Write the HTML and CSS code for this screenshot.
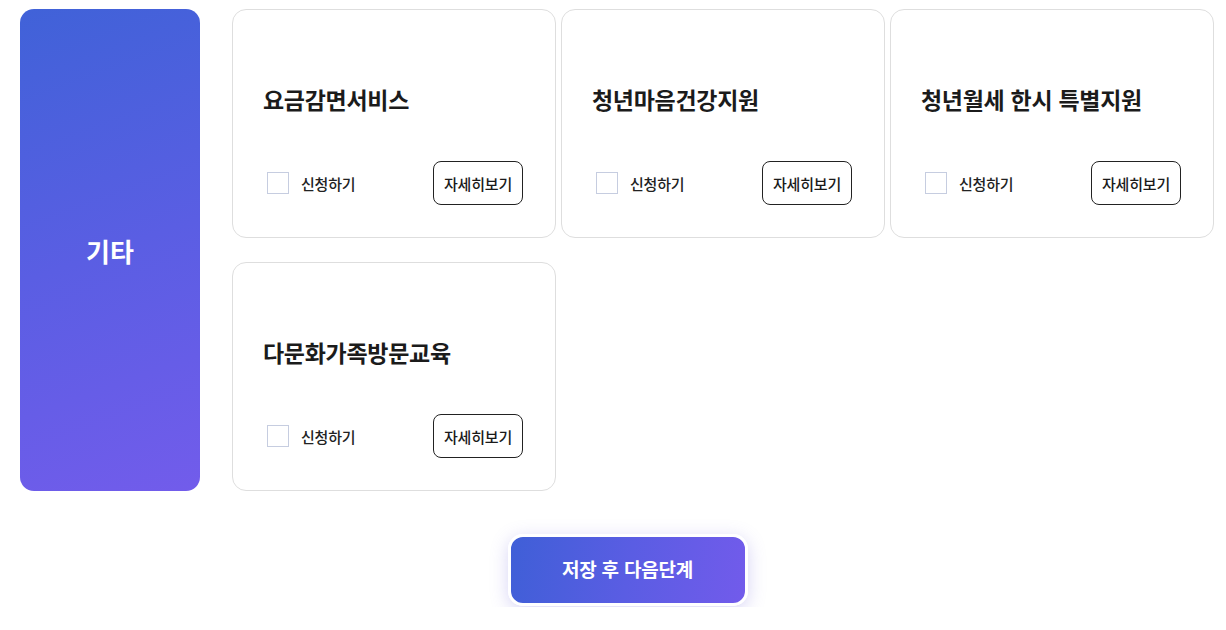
FILE: index.html
```html
<!DOCTYPE html>
<html lang="ko">
<head>
<meta charset="utf-8">
<link rel="stylesheet" href="styles.css">
</head>
<body>
<div class="page">
  <section class="group">
    <div class="group-label">기타</div>
    <div class="cards">
      <div class="card">
        <h3 class="card-title">요금감면서비스</h3>
        <div class="card-foot">
          <label class="apply"><span class="box"></span><span>신청하기</span></label>
          <button class="detail">자세히보기</button>
        </div>
      </div>
      <div class="card">
        <h3 class="card-title">청년마음건강지원</h3>
        <div class="card-foot">
          <label class="apply"><span class="box"></span><span>신청하기</span></label>
          <button class="detail">자세히보기</button>
        </div>
      </div>
      <div class="card">
        <h3 class="card-title">청년월세 한시 특별지원</h3>
        <div class="card-foot">
          <label class="apply"><span class="box"></span><span>신청하기</span></label>
          <button class="detail">자세히보기</button>
        </div>
      </div>
      <div class="card">
        <h3 class="card-title">다문화가족방문교육</h3>
        <div class="card-foot">
          <label class="apply"><span class="box"></span><span>신청하기</span></label>
          <button class="detail">자세히보기</button>
        </div>
      </div>
    </div>
  </section>
  <div class="actions">
    <button class="next">저장 후 다음단계</button>
  </div>
</div>
</body>
</html>
```
FILE: styles.css
```css
* { box-sizing: border-box; }
html, body { margin: 0; padding: 0; background: #fff; }
body {
  font-family: "Noto Sans CJK KR", "Noto Sans", sans-serif;
  color: #1a1a1a;
}
.page {
  padding: 9px 12px 0 20px;
  height: 607px;
  overflow: hidden;
}
.group {
  display: flex;
  gap: 32px;
}
.group-label {
  width: 180px;
  height: 482px;
  flex: none;
  border-radius: 14px;
  background: linear-gradient(160deg, #4062d8 0%, #5a5ee3 50%, #725ceb 100%);
  color: #fff;
  font-size: 26px;
  font-weight: 700;
  display: flex;
  align-items: center;
  justify-content: center;
}
.cards {
  display: grid;
  grid-template-columns: repeat(3, 324px);
  grid-auto-rows: 229px;
  column-gap: 5px;
  row-gap: 24px;
}
.card {
  border: 1px solid #dedede;
  border-radius: 14px;
  padding: 0 32px 32px 30px;
  display: flex;
  flex-direction: column;
  justify-content: flex-end;
}
.card-title {
  margin: 0 0 46px;
  font-size: 23px;
  line-height: 32px;
  font-weight: 700;
  letter-spacing: -0.3px;
  color: #1b1b1b;
}
.card-foot {
  display: flex;
  align-items: center;
  justify-content: space-between;
}
.apply {
  display: flex;
  align-items: center;
  gap: 12px;
  margin-left: 4px;
  font-size: 15px;
  font-weight: 500;
  letter-spacing: -0.2px;
  color: #222;
}
.box {
  width: 22px;
  height: 22px;
  border: 1px solid #c6cde0;
  background: #fff;
}
.detail {
  width: 90px;
  height: 44px;
  border: 1px solid #222;
  border-radius: 8px;
  background: #fff;
  font-family: inherit;
  font-size: 15px;
  font-weight: 500;
  letter-spacing: -0.2px;
  color: #1a1a1a;
  padding: 0;
}
.actions {
  display: flex;
  justify-content: center;
  padding: 43px 0 0 21px;
}
.next {
  width: 240px;
  height: 72px;
  border: 3px solid #fff;
  border-radius: 15px;
  background: linear-gradient(100deg, #3f5fd7 0%, #5a5de3 50%, #725beb 100%);
  box-shadow: 0 4px 18px rgba(110, 100, 220, 0.28);
  color: #fff;
  font-family: inherit;
  font-size: 19px;
  font-weight: 700;
  letter-spacing: -0.2px;
  padding: 0 0 4px;
}
```
